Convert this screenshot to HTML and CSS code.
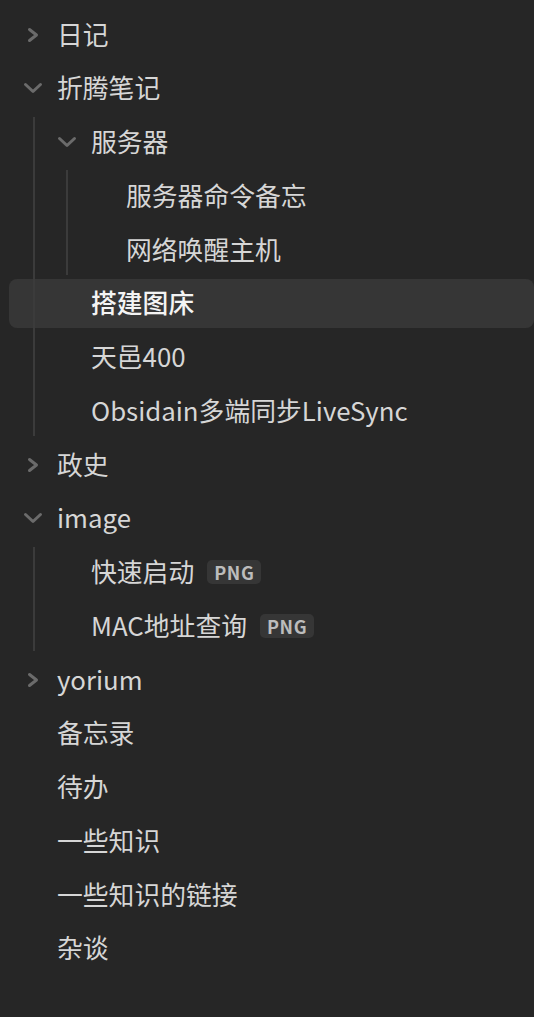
FILE: index.html
```html
<!DOCTYPE html>
<html lang="zh-CN">
<head>
<meta charset="utf-8">
<title>Files</title>
<link rel="stylesheet" href="styles.css">
</head>
<body>
<div class="tree">
  <div class="row l0"><span class="chev"><svg viewBox="0 0 20 20"><path d="M6.5 4.5 L13.5 10 L6.5 15.5"/></svg></span><span class="name">日记</span></div>
  <div class="row l0"><span class="chev"><svg viewBox="0 0 20 20"><path d="M2.5 6.5 L10 13.5 L17.5 6.5"/></svg></span><span class="name">折腾笔记</span></div>
  <div class="group g1">
    <div class="row l1"><span class="chev"><svg viewBox="0 0 20 20"><path d="M2.5 6.5 L10 13.5 L17.5 6.5"/></svg></span><span class="name">服务器</span></div>
    <div class="group g2">
      <div class="row l2"><span class="chev"></span><span class="name">服务器命令备忘</span></div>
      <div class="row l2"><span class="chev"></span><span class="name">网络唤醒主机</span></div>
    </div>
    <div class="row l1 active"><span class="chev"></span><span class="name">搭建图床</span></div>
    <div class="row l1"><span class="chev"></span><span class="name">天邑400</span></div>
    <div class="row l1"><span class="chev"></span><span class="name">Obsidain多端同步LiveSync</span></div>
  </div>
  <div class="row l0"><span class="chev"><svg viewBox="0 0 20 20"><path d="M6.5 4.5 L13.5 10 L6.5 15.5"/></svg></span><span class="name">政史</span></div>
  <div class="row l0"><span class="chev"><svg viewBox="0 0 20 20"><path d="M2.5 6.5 L10 13.5 L17.5 6.5"/></svg></span><span class="name">image</span></div>
  <div class="group g1">
    <div class="row l1"><span class="chev"></span><span class="name">快速启动</span><span class="badge">PNG</span></div>
    <div class="row l1"><span class="chev"></span><span class="name">MAC地址查询</span><span class="badge">PNG</span></div>
  </div>
  <div class="row l0"><span class="chev"><svg viewBox="0 0 20 20"><path d="M6.5 4.5 L13.5 10 L6.5 15.5"/></svg></span><span class="name">yorium</span></div>
  <div class="row l0"><span class="chev"></span><span class="name">备忘录</span></div>
  <div class="row l0"><span class="chev"></span><span class="name">待办</span></div>
  <div class="row l0"><span class="chev"></span><span class="name">一些知识</span></div>
  <div class="row l0"><span class="chev"></span><span class="name">一些知识的链接</span></div>
  <div class="row l0"><span class="chev"></span><span class="name">杂谈</span></div>
</div>
</body>
</html>
```
FILE: styles.css
```css
html, body {
  margin: 0;
  padding: 0;
  background: #262626;
}
body {
  font-family: "Noto Sans CJK SC", "Noto Sans", sans-serif;
  color: #d6d6d6;
}
.tree {
  padding: 10px 0 0 9px;
  display: flex;
  flex-direction: column;
  gap: 4.75px;
}
.group {
  position: relative;
  display: flex;
  flex-direction: column;
  gap: 4.75px;
}
.group::before {
  content: "";
  position: absolute;
  top: -1px;
  bottom: -1px;
  width: 2px;
  background: #3b3b3b;
  z-index: 2;
}
.g1::before { left: 24px; }
.g2::before { left: 57px; }
.row {
  height: 49px;
  display: flex;
  align-items: center;
  border-radius: 8px;
  font-size: 25.8px;
  line-height: 1;
  white-space: nowrap;
}
.l0 { padding-left: 14px; }
.l1 { padding-left: 48px; }
.l2 { padding-left: 83px; }
.chev {
  width: 20px;
  height: 20px;
  flex: none;
  margin-right: 14px;
  display: flex;
}
.chev svg {
  width: 20px;
  height: 20px;
  fill: none;
  stroke: #6b6b6b;
  stroke-width: 3;
  stroke-linecap: round;
  stroke-linejoin: round;
}
.name {
  position: relative;
  top: -1px;
}
.active {
  background: #363636;
  color: #f4f4f4;
  font-weight: 500;
}
.badge {
  margin-left: 13px;
  background: #363636;
  color: #bcbcbc;
  font-size: 18px;
  font-weight: 700;
  border-radius: 5px;
  padding: 3px 7px;
  letter-spacing: 0.6px;
}
```
